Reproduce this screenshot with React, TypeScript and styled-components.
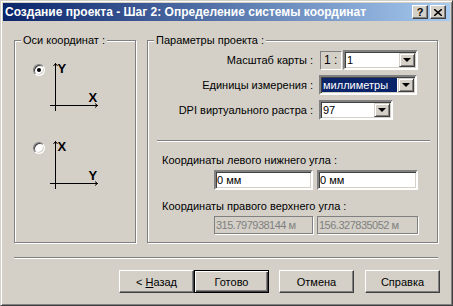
import React from "react";
import styled, { createGlobalStyle, css } from "styled-components";

const GlobalStyle = createGlobalStyle`
  html, body {
    margin: 0;
    padding: 0;
    background: #d4d0c8;
  }
`;

const Window = styled.div`
  box-sizing: border-box;
  width: 453px;
  height: 306px;
  background: #d4d0c8;
  border: 1px solid;
  border-color: #d4d0c8 #404040 #404040 #d4d0c8;
  box-shadow: inset 1px 1px #fff, inset -1px -1px #808080;
  padding: 2px;
  display: flex;
  flex-direction: column;
  font-family: "Liberation Sans", Arial, sans-serif;
  font-size: 11px;
  color: #000;
`;

const TitleBar = styled.div`
  height: 18px;
  display: flex;
  align-items: center;
  padding: 0 4px 0 2px;
  background: linear-gradient(to right, #0a246a, #a6caf0);
`;

const TitleText = styled.div`
  flex: 1;
  color: #fff;
  font-weight: bold;
  font-size: 12px;
  white-space: nowrap;
`;

const CaptionButton = styled.div`
  box-sizing: border-box;
  width: 16px;
  height: 14px;
  margin-left: 2px;
  background: #d4d0c8;
  border: 1px solid;
  border-color: #fff #404040 #404040 #fff;
  box-shadow: inset -1px -1px #808080;
  display: flex;
  align-items: center;
  justify-content: center;
  font-weight: bold;
  font-size: 11px;
  line-height: 1;
`;

const Body = styled.div`
  flex: 1;
  display: flex;
  flex-direction: column;
  padding: 19px 12px 0 11px;
`;

const GroupsRow = styled.div`
  display: flex;
  gap: 11px;
`;

const Group = styled.div<{ $width: number }>`
  box-sizing: border-box;
  width: ${(p) => p.$width}px;
  height: 203px;
  border: 1px solid #808080;
  box-shadow: inset 1px 1px #fff, 1px 1px #fff;
  display: flex;
  flex-direction: column;
`;

const GroupTitle = styled.div`
  align-self: flex-start;
  margin: -7px 0 0 6px;
  padding: 0 2px;
  height: 13px;
  line-height: 13px;
  background: #d4d0c8;
  white-space: nowrap;
`;

const AxesList = styled.div`
  display: flex;
  flex-direction: column;
  gap: 28px;
  padding: 15px 0 0 18px;
`;

const AxisOption = styled.div`
  display: flex;
  align-items: flex-start;
  gap: 4px;
`;

const Radio = styled.span<{ $checked?: boolean }>`
  box-sizing: border-box;
  flex-shrink: 0;
  width: 12px;
  height: 12px;
  margin-top: 2px;
  border-radius: 50%;
  background: #fff;
  border: 1px solid;
  border-color: #808080 #fff #fff #808080;
  box-shadow: inset 1px 1px #404040, inset -1px -1px #d4d0c8;
  display: flex;
  align-items: center;
  justify-content: center;

  &::after {
    content: "";
    width: 4px;
    height: 4px;
    border-radius: 50%;
    background: ${(p) => (p.$checked ? "#000" : "transparent")};
  }
`;

const FormGrid = styled.div`
  display: grid;
  grid-template-columns: 165px 1fr;
  column-gap: 6px;
  row-gap: 5px;
  margin-top: 3px;
`;

const FieldLabel = styled.div`
  height: 20px;
  line-height: 20px;
  text-align: right;
  white-space: nowrap;
`;

const FieldCell = styled.div`
  display: flex;
  align-items: center;
  gap: 1px;
`;

const ScaleBox = styled.div`
  box-sizing: border-box;
  width: 22px;
  height: 19px;
  margin-left: 1px;
  border: 1px solid;
  border-color: #808080 #fff #fff #808080;
  padding-left: 3px;
  line-height: 17px;
  font-size: 12px;
`;

const Sunken = css`
  box-sizing: border-box;
  border: 2px solid;
  border-color: #808080 #fff #fff #808080;
  box-shadow: inset 1px 1px #404040, inset -1px -1px #d4d0c8;
  padding: 1px;
`;

const Combo = styled.div<{ $width: number }>`
  ${Sunken}
  width: ${(p) => p.$width}px;
  height: 20px;
  background: #fff;
  display: flex;
  align-items: stretch;
`;

const ComboText = styled.div<{ $selected?: boolean }>`
  flex: 1;
  padding-left: 1px;
  line-height: 14px;
  font-size: 11px;
  white-space: nowrap;
  overflow: hidden;
  margin-right: 1px;
  ${(p) =>
    p.$selected &&
    css`
      background: #0a246a;
      color: #fff;
    `}
`;

const DropButton = styled.div`
  box-sizing: border-box;
  width: 16px;
  background: #d4d0c8;
  border: 1px solid;
  border-color: #d4d0c8 #404040 #404040 #d4d0c8;
  box-shadow: inset 1px 1px #fff, inset -1px -1px #808080;
  display: flex;
  align-items: center;
  justify-content: center;

  &::after {
    content: "";
    border-left: 4px solid transparent;
    border-right: 4px solid transparent;
    border-top: 4px solid #000;
  }
`;

const Separator = styled.div<{ $inset?: boolean }>`
  height: 0;
  border-top: 1px solid #808080;
  border-bottom: 1px solid #fff;
  ${(p) =>
    p.$inset
      ? css`
          margin: 20px 7px 0 9px;
        `
      : css`
          margin-top: 14px;
        `}
`;

const CoordLabel = styled.div<{ $top: number }>`
  margin-top: ${(p) => p.$top}px;
  padding-left: 14px;
  height: 13px;
  line-height: 13px;
  white-space: nowrap;
`;

const CoordRow = styled.div<{ $top: number }>`
  display: flex;
  gap: 4px;
  margin-top: ${(p) => p.$top}px;
  padding-left: 66px;
`;

const Edit = styled.div<{ $width: number }>`
  ${Sunken}
  width: ${(p) => p.$width}px;
  height: 20px;
  background: #fff;
  line-height: 14px;
  font-size: 11px;
  white-space: nowrap;
`;

const DisabledEdit = styled.div<{ $width: number }>`
  box-sizing: border-box;
  width: ${(p) => p.$width}px;
  height: 18px;
  border: 1px solid #808080;
  box-shadow: 1px 1px #fff;
  padding-left: 1px;
  line-height: 16px;
  font-size: 11px;
  letter-spacing: -0.5px;
  color: #808080;
  white-space: nowrap;
  overflow: hidden;
`;

const ButtonRow = styled.div`
  display: flex;
  justify-content: flex-end;
  margin: 11px -2px 0 0;
`;

const Button = styled.div<{ $default?: boolean; $gap: number }>`
  box-sizing: border-box;
  width: 75px;
  height: 23px;
  margin-left: ${(p) => p.$gap}px;
  background: #d4d0c8;
  border: 1px solid;
  border-color: #fff #404040 #404040 #fff;
  box-shadow: inset -1px -1px #808080;
  display: flex;
  align-items: center;
  justify-content: center;
  font-size: 11px;
  ${(p) =>
    p.$default &&
    css`
      border: 1px solid #000;
      box-shadow: inset 1px 1px #fff, inset -1px -1px #404040, inset -2px -2px #808080;
    `}
`;

const AxisIcon = ({ up, right }: { up: string; right: string }) => (
  <svg width="50" height="50" viewBox="0 0 50 50">
    <path d="M6.5 1v48M1 43.5h48" stroke="#000" fill="none" />
    <polyline points="4.5,4 6.5,1.5 8.5,4" stroke="#000" fill="none" />
    <polyline points="46,41.5 48.5,43.5 46,45.5" stroke="#000" fill="none" />
    <text x="8.5" y="11" fontFamily="Liberation Sans, Arial, sans-serif" fontWeight="bold" fontSize="13">
      {up}
    </text>
    <text x="39.5" y="40" fontFamily="Liberation Sans, Arial, sans-serif" fontWeight="bold" fontSize="13">
      {right}
    </text>
  </svg>
);

const App = () => {
  return (
    <>
      <GlobalStyle />
      <Window>
        <TitleBar>
          <TitleText>Создание проекта - Шаг 2: Определение системы координат</TitleText>
          <CaptionButton>?</CaptionButton>
          <CaptionButton>
            <svg width="8" height="7" viewBox="0 0 8 7">
              <path d="M0 0l8 7M8 0L0 7" stroke="#000" strokeWidth="1.5" />
            </svg>
          </CaptionButton>
        </TitleBar>
        <Body>
          <GroupsRow>
            <Group $width={122}>
              <GroupTitle>Оси координат :</GroupTitle>
              <AxesList>
                <AxisOption>
                  <Radio $checked />
                  <AxisIcon up="Y" right="X" />
                </AxisOption>
                <AxisOption>
                  <Radio />
                  <AxisIcon up="X" right="Y" />
                </AxisOption>
              </AxesList>
            </Group>
            <Group $width={291}>
              <GroupTitle>Параметры проекта :</GroupTitle>
              <FormGrid>
                <FieldLabel>Масштаб карты :</FieldLabel>
                <FieldCell>
                  <ScaleBox>1 :</ScaleBox>
                  <Combo $width={75}>
                    <ComboText>1</ComboText>
                    <DropButton />
                  </Combo>
                </FieldCell>
                <FieldLabel>Единицы измерения :</FieldLabel>
                <FieldCell>
                  <Combo $width={98}>
                    <ComboText $selected>миллиметры</ComboText>
                    <DropButton />
                  </Combo>
                </FieldCell>
                <FieldLabel>DPI виртуального растра :</FieldLabel>
                <FieldCell>
                  <Combo $width={74}>
                    <ComboText>97</ComboText>
                    <DropButton />
                  </Combo>
                </FieldCell>
              </FormGrid>
              <Separator $inset />
              <CoordLabel $top={12}>Координаты левого нижнего угла :</CoordLabel>
              <CoordRow $top={3}>
                <Edit $width={99}>0 мм</Edit>
                <Edit $width={101}>0 мм</Edit>
              </CoordRow>
              <CoordLabel $top={10}>Координаты правого верхнего угла :</CoordLabel>
              <CoordRow $top={3}>
                <DisabledEdit $width={99}>315.797938144 м</DisabledEdit>
                <DisabledEdit $width={101}>156.327835052 м</DisabledEdit>
              </CoordRow>
            </Group>
          </GroupsRow>
          <Separator />
          <ButtonRow>
            <Button $gap={0}>
              &lt;&nbsp;<u>Н</u>азад
            </Button>
            <Button $gap={0} $default>
              Готово
            </Button>
            <Button $gap={10}>Отмена</Button>
            <Button $gap={11}>Справка</Button>
          </ButtonRow>
        </Body>
      </Window>
    </>
  );
};

export default App;
